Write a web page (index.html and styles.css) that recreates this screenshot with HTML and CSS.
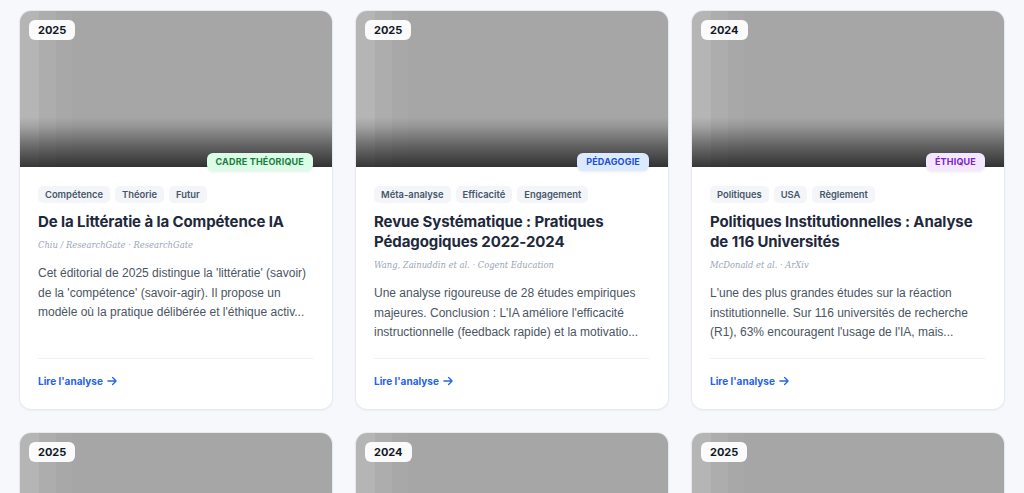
FILE: index.html
```html
<!DOCTYPE html>
<html lang="fr">
<head>
<meta charset="utf-8">
<title>Analyses</title>
<link rel="stylesheet" href="styles.css">
</head>
<body>
<main class="grid">
  <article class="card">
    <div class="media">
      <span class="year">2025</span>
      <span class="cat cat-green">Cadre théorique</span>
    </div>
    <div class="body">
      <div class="tags"><span class="tag">Compétence</span><span class="tag">Théorie</span><span class="tag">Futur</span></div>
      <h2 class="title">De la Littératie à la Compétence IA</h2>
      <p class="meta">Chiu / ResearchGate · ResearchGate</p>
      <p class="desc">Cet éditorial de 2025 distingue la 'littératie' (savoir) de la 'compétence' (savoir-agir). Il propose un modèle où la pratique délibérée et l'éthique activ...</p>
      <div class="foot"><a class="link" href="#">Lire l'analyse <svg class="arrow" viewBox="0 0 24 24" width="14" height="14"><path d="M5 12h14M13 6l6 6-6 6" fill="none" stroke="currentColor" stroke-width="2.2" stroke-linecap="round" stroke-linejoin="round"/></svg></a></div>
    </div>
  </article>
  <article class="card">
    <div class="media">
      <span class="year">2025</span>
      <span class="cat cat-blue">Pédagogie</span>
    </div>
    <div class="body">
      <div class="tags"><span class="tag">Méta-analyse</span><span class="tag">Efficacité</span><span class="tag">Engagement</span></div>
      <h2 class="title">Revue Systématique : Pratiques Pédagogiques 2022-2024</h2>
      <p class="meta">Wang, Zainuddin et al. · Cogent Education</p>
      <p class="desc">Une analyse rigoureuse de 28 études empiriques majeures. Conclusion : L'IA améliore l'efficacité instructionnelle (feedback rapide) et la motivatio...</p>
      <div class="foot"><a class="link" href="#">Lire l'analyse <svg class="arrow" viewBox="0 0 24 24" width="14" height="14"><path d="M5 12h14M13 6l6 6-6 6" fill="none" stroke="currentColor" stroke-width="2.2" stroke-linecap="round" stroke-linejoin="round"/></svg></a></div>
    </div>
  </article>
  <article class="card">
    <div class="media">
      <span class="year">2024</span>
      <span class="cat cat-purple">Éthique</span>
    </div>
    <div class="body">
      <div class="tags"><span class="tag">Politiques</span><span class="tag">USA</span><span class="tag">Règlement</span></div>
      <h2 class="title">Politiques Institutionnelles : Analyse de 116 Universités</h2>
      <p class="meta">McDonald et al. · ArXiv</p>
      <p class="desc">L'une des plus grandes études sur la réaction institutionnelle. Sur 116 universités de recherche (R1), 63% encouragent l'usage de l'IA, mais...</p>
      <div class="foot"><a class="link" href="#">Lire l'analyse <svg class="arrow" viewBox="0 0 24 24" width="14" height="14"><path d="M5 12h14M13 6l6 6-6 6" fill="none" stroke="currentColor" stroke-width="2.2" stroke-linecap="round" stroke-linejoin="round"/></svg></a></div>
    </div>
  </article>
  <article class="card">
    <div class="media"><span class="year">2025</span></div>
  </article>
  <article class="card">
    <div class="media"><span class="year">2024</span></div>
  </article>
  <article class="card">
    <div class="media"><span class="year">2025</span></div>
  </article>
</main>
</body>
</html>
```
FILE: styles.css
```css
* { box-sizing: border-box; }
html, body { margin: 0; padding: 0; }
body {
  background: #f7f8fb;
  font-family: Inter, "Noto Sans", sans-serif;
  color: #1e293b;
  overflow: hidden;
  height: 493px;
}
.grid {
  display: grid;
  grid-template-columns: repeat(3, 1fr);
  gap: 22px;
  padding: 10px 19px;
}
.card {
  background: #fff;
  border: 1px solid #e6e9f0;
  border-radius: 12px;
  box-shadow: 0 1px 2px rgba(15, 23, 42, 0.04);
  display: flex;
  flex-direction: column;
  height: 400px;
}
.media {
  position: relative;
  height: 156px;
  flex: none;
  border-radius: 11px 11px 0 0;
  background:
    linear-gradient(to top, rgba(0,0,0,0.7) 0%, rgba(0,0,0,0.4) 14%, rgba(0,0,0,0.1) 26%, rgba(0,0,0,0) 32%),
    linear-gradient(to right, #b5b5b5 0, #b5b5b5 19px, #adadad 19px, #adadad 36px, #a8a8a8 36px, #a8a8a8 52px, #a6a6a6 52px);
}
.year {
  position: absolute;
  top: 9px;
  left: 9px;
  background: rgba(255,255,255,0.94);
  color: #111827;
  font-size: 11px;
  font-weight: 700;
  line-height: 20px;
  padding: 0 9px;
  border-radius: 6px;
}
.cat {
  position: absolute;
  right: 19px;
  bottom: -4px;
  font-size: 9px;
  font-weight: 700;
  letter-spacing: 0.02em;
  text-transform: uppercase;
  line-height: 18px;
  padding: 0 9px;
  border-radius: 6px;
  box-shadow: 0 1px 3px rgba(0,0,0,0.08);
}
.cat-green { background: #dcfce7; color: #15803d; }
.cat-blue { background: #dbeafe; color: #1d4ed8; }
.cat-purple { background: #f3e8ff; color: #7e22ce; }
.body {
  flex: 1;
  display: flex;
  flex-direction: column;
  padding: 19px 19px 0 18px;
}
.tags { display: flex; gap: 5px; flex: none; }
.tag {
  background: #f3f5f9;
  color: #475569;
  font-size: 9.4px;
  font-weight: 600;
  line-height: 17px;
  padding: 0 7px;
  border-radius: 5px;
}
.title {
  margin: 9px 0 0;
  font-size: 15px;
  font-weight: 700;
  line-height: 20px;
  letter-spacing: -0.1px;
  color: #1e293b;
  flex: none;
}
.meta {
  margin: 5px 0 0;
  font-family: "DejaVu Serif Condensed", "DejaVu Serif", serif;
  font-stretch: condensed;
  font-style: italic;
  font-size: 9.3px;
  line-height: 16px;
  color: #9aa5b8;
  flex: none;
}
.desc {
  margin: 11px 0 0;
  font-family: "Liberation Sans", Arial, sans-serif;
  font-size: 12px;
  line-height: 19.5px;
  color: #4b5563;
  flex: none;
}
.foot {
  margin-top: auto;
  border-top: 1px solid #eef0f4;
  padding: 15px 0 21px;
  display: flex;
  flex: none;
}
.link {
  display: inline-flex;
  align-items: center;
  gap: 2px;
  color: #2563eb;
  font-size: 10px;
  font-weight: 700;
  line-height: 14px;
  text-decoration: none;
}
.arrow { display: block; }
```
